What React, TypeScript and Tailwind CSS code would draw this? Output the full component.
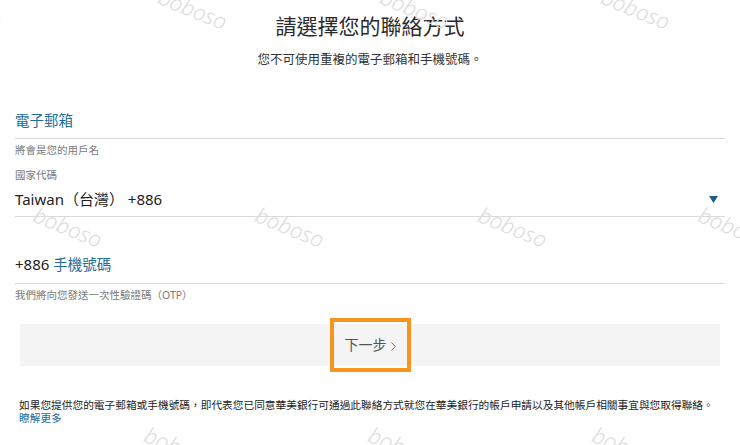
import React from "react";

const marks = [
  { x: -60, y: -18 },
  { x: 165, y: -18 },
  { x: 387, y: -18 },
  { x: 608, y: -18 },
  { x: 40, y: 200 },
  { x: 262, y: 200 },
  { x: 485, y: 200 },
  { x: 705, y: 200 },
  { x: 151, y: 420 },
  { x: 375, y: 420 },
  { x: 599, y: 420 },
];

export default function App() {
  return (
    <div
      className="relative w-[740px] h-[445px] overflow-hidden bg-white text-[#333]"
      style={{ fontFamily: '"Noto Sans", "Noto Sans CJK TC", sans-serif' }}
    >
      <div className="flex flex-col px-[15px]">
        <h1 className="mt-[12px] text-center text-[21px] leading-[28px] font-normal text-[#2b2b2b]">
          請選擇您的聯絡方式
        </h1>
        <p className="mt-[11px] text-center text-[12.5px] leading-[18px] text-[#333]">
          您不可使用重複的電子郵箱和手機號碼。
        </p>

        {/* email */}
        <div className="mt-[41px] pb-[8px] border-b border-[#dadada] text-[14.5px] leading-[20px] text-[#246b98]">
          電子郵箱
        </div>
        <p className="mt-[4px] text-[10.5px] leading-[14px] text-[#7a7a7a]">將會是您的用戶名</p>

        {/* country code */}
        <p className="mt-[11px] text-[10.5px] leading-[14px] text-[#7a7a7a]">國家代碼</p>
        <div className="mt-[7px] pb-[7px] border-b border-[#dadada] flex items-center justify-between text-[15px] leading-[20px] text-[#222]">
          <span>Taiwan（台灣） +886</span>
          <svg width="9" height="7" viewBox="0 0 9 7" className="mr-[7px]">
            <path d="M0 0 H9 L4.5 7 Z" fill="#1d5d8e" />
          </svg>
        </div>

        {/* phone */}
        <div className="mt-[37px] pb-[9px] border-b border-[#dadada] text-[15px] leading-[20px] text-[#222]">
          +886 <span className="text-[14.5px] text-[#246b98]">手機號碼</span>
        </div>
        <p className="mt-[4px] text-[10.5px] leading-[14px] text-[#7a7a7a]">我們將向您發送一次性驗證碼（OTP）</p>

        {/* next button */}
        <div className="mt-[22px] mx-[5px] h-[42px] bg-[#f4f4f4] flex items-center justify-center">
          <button
            type="button"
            className="h-[54px] w-[81px] border-[4px] border-[#f7941d] flex items-center justify-center gap-[4px] text-[14px] leading-[20px] text-[#555]"
          >
            <span>下一步</span>
            <svg width="5" height="9" viewBox="0 0 5 9" className="mt-[2px]">
              <path d="M0.5 0.5 L4.3 4.5 L0.5 8.5" fill="none" stroke="#666" strokeWidth="1" />
            </svg>
          </button>
        </div>

        <p className="mt-[33px] ml-[4px] text-[10.7px] leading-[13px] text-[#222]">
          如果您提供您的電子郵箱或手機號碼，即代表您已同意華美銀行可通過此聯絡方式就您在華美銀行的帳戶申請以及其他帳戶相關事宜與您取得聯絡。
          <br />
          <a className="text-[#246b98]">瞭解更多</a>
        </p>
      </div>

      {/* watermark */}
      {marks.map((m, i) => (
        <span
          key={i}
          className="pointer-events-none absolute text-[22px] leading-[28px] font-light italic text-[#dcdcdc] rotate-[22deg] origin-top-left select-none"
          style={{ left: m.x, top: m.y }}
        >
          boboso
        </span>
      ))}
    </div>
  );
}
